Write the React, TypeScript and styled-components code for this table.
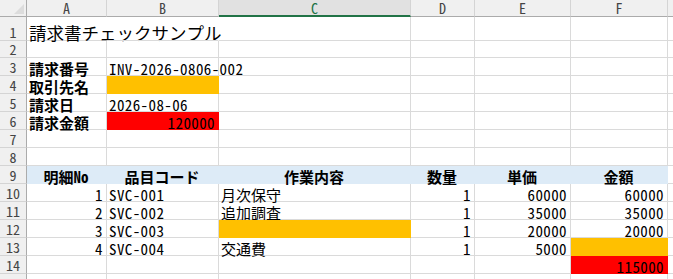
import React from "react";
import styled, { createGlobalStyle, css } from "styled-components";

const GlobalStyle = createGlobalStyle`
  html, body { margin: 0; padding: 0; background: #ffffff; overflow: hidden; }
  body { width: 673px; height: 279px; }
`;

const FONT = `"Noto Sans Mono CJK JP", "Noto Sans CJK JP", "Noto Sans", sans-serif`;

const Sheet = styled.div`
  display: grid;
  grid-template-columns: 27px 80px 112px 192px 64px 96px 97px 1fr;
  grid-template-rows: 17px 24px 17px repeat(13, 18px);
  width: 673px;
  height: 279px;
  overflow: hidden;
  font-family: ${FONT};
  font-feature-settings: "hwid" 1;
  background: #ffffff;
`;

const Corner = styled.div`
  position: relative;
  box-sizing: border-box;
  background: #f0f0f0;
  border-right: 1px solid #ababab;
  border-bottom: 1px solid #ababab;
  &::after {
    content: "";
    position: absolute;
    right: 2px;
    bottom: 2px;
    width: 0;
    height: 0;
    border-left: 10px solid transparent;
    border-bottom: 10px solid #dcdcdc;
  }
`;

const ColHeader = styled.div<{ $active?: boolean }>`
  box-sizing: border-box;
  display: flex;
  align-items: center;
  justify-content: center;
  background: ${(p) => (p.$active ? "#e1e1e1" : "#f0f0f0")};
  color: ${(p) => (p.$active ? "#217346" : "#444444")};
  border-right: 1px solid #d4d4d4;
  border-bottom: ${(p) => (p.$active ? "2px solid #217346" : "1px solid #ababab")};
  font-size: 14px;
  line-height: 16px;
  padding-top: ${(p) => (p.$active ? "1px" : "0")};
`;

const RowHeader = styled.div`
  box-sizing: border-box;
  display: flex;
  align-items: flex-end;
  justify-content: center;
  background: #f0f0f0;
  color: #444444;
  border-right: 1px solid #ababab;
  border-bottom: 1px solid #d4d4d4;
  font-size: 14px;
  line-height: 14px;
  padding-bottom: 1px;
`;

type Align = "left" | "right" | "center";

const Cell = styled.div<{
  $align?: Align;
  $bg?: string;
  $bold?: boolean;
  $noRight?: boolean;
  $size?: number;
}>`
  box-sizing: border-box;
  display: flex;
  align-items: flex-end;
  justify-content: ${(p) =>
    p.$align === "right" ? "flex-end" : p.$align === "center" ? "center" : "flex-start"};
  padding: 0 3px 0 2px;
  white-space: nowrap;
  overflow: visible;
  color: #000000;
  font-size: ${(p) => p.$size ?? 15}px;
  line-height: ${(p) => p.$size ?? 15}px;
  font-weight: ${(p) => (p.$bold ? 700 : 400)};
  border-bottom: 1px solid #dadada;
  border-right: 1px solid #dadada;
  ${(p) =>
    p.$noRight &&
    css`
      border-right-color: transparent;
    `}
  ${(p) =>
    p.$bg &&
    css`
      background: ${p.$bg};
      border-right-color: ${p.$bg};
      border-bottom-color: ${p.$bg};
    `}
`;

const Text = styled.span<{ $latin?: boolean }>`
  display: block;
  margin-bottom: -1px;
  letter-spacing: ${(p) => (p.$latin ? "0.4px" : "0")};
`;

const YELLOW = "#ffc000";
const RED = "#ff0000";
const BLUE = "#ddebf7";

type CellDef = {
  v?: string;
  align?: Align;
  bg?: string;
  bold?: boolean;
  noRight?: boolean;
  size?: number;
  latin?: boolean;
};

const cols = ["A", "B", "C", "D", "E", "F", ""];

const r = (...cells: CellDef[]): CellDef[] => {
  const out = [...cells];
  while (out.length < 7) out.push({});
  return out;
};

const hdr = (v: string): CellDef => ({ v, align: "center", bg: BLUE, bold: true });
const num = (v: string, bg?: string): CellDef => ({ v, align: "right", bg, latin: true });
const code = (v: string): CellDef => ({ v, latin: true });

const rows: CellDef[][] = [
  r({ v: "請求書チェックサンプル", size: 17.5, noRight: true }, { noRight: true }),
  r(),
  r({ v: "請求番号", bold: true }, code("INV-2026-0806-002")),
  r({ v: "取引先名", bold: true }, { bg: YELLOW }),
  r({ v: "請求日", bold: true }, code("2026-08-06")),
  r({ v: "請求金額", bold: true }, num("120000", RED)),
  r(),
  r(),
  r(hdr("明細No"), hdr("品目コード"), hdr("作業内容"), hdr("数量"), hdr("単価"), hdr("金額")),
  r(num("1"), code("SVC-001"), { v: "月次保守" }, num("1"), num("60000"), num("60000")),
  r(num("2"), code("SVC-002"), { v: "追加調査" }, num("1"), num("35000"), num("35000")),
  r(num("3"), code("SVC-003"), { bg: YELLOW }, num("1"), num("20000"), num("20000")),
  r(num("4"), code("SVC-004"), { v: "交通費" }, num("1"), num("5000"), { bg: YELLOW }),
  r({}, {}, {}, {}, {}, num("115000", RED)),
  r(),
];

export default function App() {
  return (
    <>
      <GlobalStyle />
      <Sheet>
        <Corner />
        {cols.map((c, i) => (
          <ColHeader key={`h${i}`} $active={c === "C"}>
            {c}
          </ColHeader>
        ))}
        {rows.map((row, ri) => (
          <React.Fragment key={ri}>
            <RowHeader>{ri + 1}</RowHeader>
            {row.map((cell, ci) => (
              <Cell
                key={ci}
                $align={cell.align}
                $bg={cell.bg}
                $bold={cell.bold}
                $noRight={cell.noRight}
                $size={cell.size}
              >
                {cell.v !== undefined && <Text $latin={cell.latin}>{cell.v}</Text>}
              </Cell>
            ))}
          </React.Fragment>
        ))}
      </Sheet>
    </>
  );
}
